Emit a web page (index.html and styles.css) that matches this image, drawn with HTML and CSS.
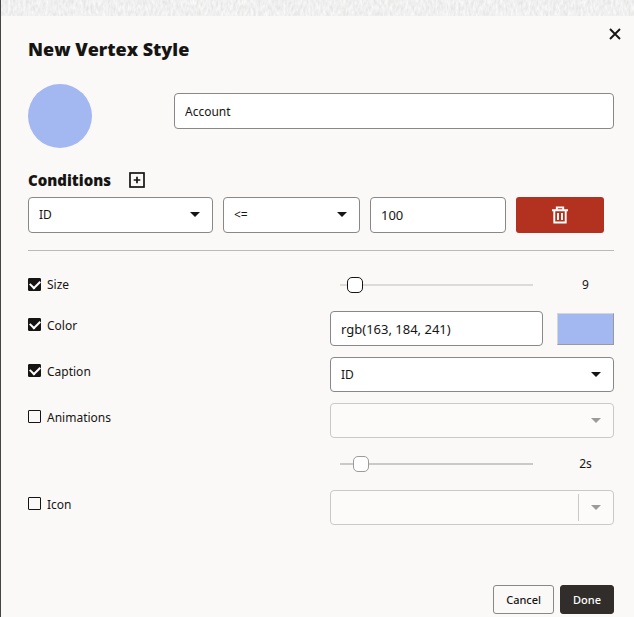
FILE: index.html
```html
<!DOCTYPE html>
<html lang="en">
<head>
<meta charset="utf-8">
<meta name="viewport" content="width=device-width, initial-scale=1">
<title>New Vertex Style</title>
<link rel="stylesheet" href="styles.css">
</head>
<body>
<main class="dialog">
  <svg class="texture" aria-hidden="true">
    <filter id="grain" x="0" y="0" width="100%" height="100%">
      <feTurbulence type="fractalNoise" baseFrequency="0.4 0.18" numOctaves="2" seed="4"/>
      <feColorMatrix values="0.28 0 0 0 0.735  0.28 0 0 0 0.73  0.28 0 0 0 0.726  0 0 0 0 1"/>
    </filter>
    <rect width="100%" height="100%" filter="url(#grain)"/>
  </svg>
  <button class="close" type="button" aria-label="Close">
    <svg width="12" height="12" viewBox="0 0 12 12"><path d="M1 1l10 10M11 1L1 11" fill="none" stroke="currentColor" stroke-width="1.9"/></svg>
  </button>
  <form class="content">
    <h1 class="title">New Vertex Style</h1>
    <div class="identity">
      <div class="preview"></div>
      <input class="field" type="text" value="Account" aria-label="Label">
    </div>
    <div class="section">
      <h2 class="subtitle">Conditions</h2>
      <button class="add" type="button" aria-label="Add condition">
        <svg width="16" height="16" viewBox="0 0 16 16" fill="none" stroke="currentColor"><rect x="1" y="1" width="14" height="14" stroke-width="1.7"/><path d="M8 4.7v6.6M4.7 8h6.6" stroke-width="1.7"/></svg>
      </button>
    </div>
    <div class="conditions">
      <div class="select"><select class="field" aria-label="Property"><option>ID</option></select></div>
      <div class="select"><select class="field" aria-label="Operator"><option>&lt;=</option></select></div>
      <input class="field numeric" type="text" value="100" aria-label="Value">
      <button class="delete" type="button" aria-label="Delete condition">
        <svg width="18" height="18" viewBox="0 0 18 18" fill="none" stroke="currentColor" stroke-width="1.9"><path d="M1 4.3h16M5.8 4V1.4h6.4V4M3.3 4.5v12h11.4v-12M7 7v7M11 7v7"/></svg>
      </button>
    </div>
    <hr class="divider">
    <div class="settings">
      <div class="row">
        <label class="check"><input type="checkbox" checked>Size</label>
        <div class="pair">
          <input class="slider" type="range" min="1" max="200" value="9" aria-label="Size value">
          <output class="amount">9</output>
        </div>
      </div>
      <div class="row boxed">
        <label class="check"><input type="checkbox" checked>Color</label>
        <div class="pair">
          <input class="field numeric" type="text" value="rgb(163, 184, 241)" aria-label="Color value">
          <button class="swatch" type="button" aria-label="Pick color"></button>
        </div>
      </div>
      <div class="row boxed">
        <label class="check"><input type="checkbox" checked>Caption</label>
        <div class="select"><select class="field" aria-label="Caption property"><option>ID</option></select></div>
      </div>
      <div class="row boxed">
        <label class="check"><input type="checkbox">Animations</label>
        <div class="select off"><select class="field" aria-label="Animation" disabled><option></option></select></div>
      </div>
      <div class="row">
        <span></span>
        <div class="pair">
          <input class="slider" type="range" min="0" max="27" value="2" aria-label="Animation duration" disabled>
          <output class="amount">2s</output>
        </div>
      </div>
      <div class="row boxed">
        <label class="check"><input type="checkbox">Icon</label>
        <div class="select off split"><select class="field" aria-label="Icon name" disabled><option></option></select></div>
      </div>
    </div>
    <div class="actions">
      <button class="button" type="button">Cancel</button>
      <button class="button primary" type="submit">Done</button>
    </div>
  </form>
</main>
</body>
</html>
```
FILE: styles.css
```css
* { box-sizing: border-box; }

body {
  margin: 0;
  background: #fbf9f8;
  color: #161513;
  font: 12px/20px "Noto Sans", "Open Sans", sans-serif;
}

.dialog {
  position: relative;
  min-height: 100vh;
  border-left: 1px solid #444;
}

.texture { display: block; width: 100%; height: 16px; }

.close {
  position: absolute;
  top: 24px;
  right: 9px;
  display: grid;
  place-items: center;
  width: 20px;
  height: 20px;
  padding: 0;
  border: 0;
  background: none;
  color: #161513;
}

.content { padding: 20px 20px 3px 27px; }

.title { margin: 0; font: 800 18px/26px "Open Sans", sans-serif; }

.identity {
  display: grid;
  grid-template-columns: 146fr 440fr;
  align-items: center;
  margin-top: 22px;
}
.identity .field { margin-bottom: 10px; }

.preview {
  width: 64px;
  height: 64px;
  border-radius: 50%;
  background: #a3b8f1;
}

.section {
  display: flex;
  align-items: center;
  gap: 18px;
  margin-top: 22px;
}

.subtitle { margin: 0; font: 800 15px/20px "Open Sans", sans-serif; }

.add {
  display: flex;
  padding: 0;
  border: 0;
  background: none;
  color: #161513;
}

.field {
  width: 100%;
  min-width: 0;
  height: 36px;
  margin: 0;
  padding: 0 10px;
  border: 1px solid #8a8886;
  border-radius: 4px;
  background: #fff;
  color: inherit;
  font: inherit;
  appearance: none;
}
.numeric { font-size: 13px; }

.conditions {
  display: grid;
  grid-template-columns: 185fr 137fr 136fr 88fr;
  gap: 10px;
  margin: 7px 10px 0 0;
}

.select { position: relative; }
.select .field { display: block; padding: 0 28px 0 10px; }
.select::after {
  content: "";
  position: absolute;
  top: 15px;
  right: 13px;
  width: 10px;
  height: 5px;
  background: #161513;
  clip-path: polygon(0 0, 100% 0, 50% 100%);
  pointer-events: none;
}
.off::after { background: #9d9b9a; }
.off .field { border-color: #cbc9c8; background: #fcfbfa; opacity: 1; }
.split::before {
  content: "";
  position: absolute;
  top: 4px;
  bottom: 4px;
  right: 35px;
  width: 1px;
  background: #cbc9c8;
}

.delete {
  display: grid;
  place-items: center;
  padding: 0;
  border: 0;
  border-radius: 3px;
  background: #b3311f;
  color: #fff;
}

.divider { margin: 17px 0 0; border: 0; border-top: 1px solid #bcbab8; }

.settings { display: grid; gap: 11px; margin-top: 19px; }
.settings .field { height: 35px; }

.row {
  display: grid;
  grid-template-columns: 302fr 284fr;
  align-items: center;
  min-height: 30px;
}

.check { display: flex; align-items: center; gap: 6px; }
.boxed .check { padding-bottom: 6px; }
.check input {
  display: grid;
  place-items: center;
  width: 13px;
  height: 13px;
  margin: 0 0 2px;
  border: 1px solid #161513;
  border-radius: 1px;
  background: transparent;
  appearance: none;
}
.check input:checked { background: #161513; }
.check input:checked::before {
  content: "";
  width: 8px;
  height: 5px;
  margin-bottom: 2px;
  border: solid #fff;
  border-width: 0 0 2px 2px;
  transform: rotate(-45deg);
}

.pair {
  display: grid;
  grid-template-columns: 1fr 57px;
  gap: 14px;
  align-items: center;
}

.slider {
  height: 16px;
  margin: 0 10px;
  min-width: 0;
  background: linear-gradient(#dddbda, #dddbda) center / 100% 2px no-repeat;
  appearance: none;
}
.slider::-webkit-slider-thumb {
  width: 16px;
  height: 16px;
  border: 1px solid #161513;
  border-radius: 5px;
  background: #fff;
  appearance: none;
}
.slider:disabled { background-image: linear-gradient(#cbc9c8, #cbc9c8); }
.slider:disabled::-webkit-slider-thumb { border-color: #9d9b9a; }

.amount { text-align: center; }

.swatch {
  height: 32px;
  padding: 0;
  border: 1px solid;
  border-color: #d5d5d5 #9a9a9a #9a9a9a #d5d5d5;
  background: #a3b8f1;
}

.actions {
  display: flex;
  justify-content: flex-end;
  gap: 6px;
  margin-top: 60px;
}

.button {
  height: 29px;
  padding: 0 12px;
  border: 1px solid #8a8886;
  border-radius: 3px;
  background: transparent;
  color: #161513;
  font: 500 11px/16px "Noto Sans", "Open Sans", sans-serif;
}
.primary { border-color: #312d2a; background: #312d2a; color: #fff; }
```
